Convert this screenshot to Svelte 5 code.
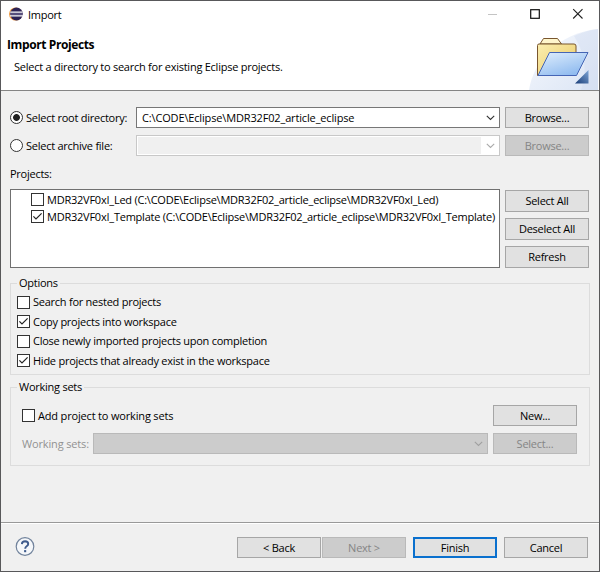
<script>
  let source = $state('root');
  let rootDirectory = 'C:\\CODE\\Eclipse\\MDR32F02_article_eclipse';

  let projects = $state([
    { name: 'MDR32VF0xI_Led', checked: false },
    { name: 'MDR32VF0xI_Template', checked: true },
  ]);

  let options = $state([
    { label: 'Search for nested projects', checked: false },
    { label: 'Copy projects into workspace', checked: true },
    { label: 'Close newly imported projects upon completion', checked: false },
    { label: 'Hide projects that already exist in the workspace', checked: true },
  ]);

  let useWorkingSets = $state(false);

  function setAll(checked) {
    projects.forEach((project) => {
      project.checked = checked;
    });
  }
</script>

{#snippet chevron()}
  <svg class="chevron" width="9" height="6" viewBox="0 0 9 6">
    <path d="M0.8 0.8 L4.5 4.5 L8.2 0.8" fill="none" stroke="currentColor" stroke-width="1.1" />
  </svg>
{/snippet}

<main class="dialog">
  <header class="titlebar">
    <svg class="logo" width="14" height="14" viewBox="0 0 14 14">
      <circle cx="6.6" cy="7" r="6.6" fill="#f39a3b" />
      <circle cx="7.5" cy="7" r="6.4" fill="#2c2255" />
      <path d="M1.2 5.1h12.5M0.9 8.9h13" stroke="#fff" stroke-width="1.1" />
      <path d="M0.9 7h13" stroke="#8d88ad" stroke-width="0.9" />
    </svg>
    <span class="title">Import</span>
    <svg class="controls" width="98" height="12" viewBox="0 0 98 12">
      <path d="M1 6.5h9" stroke="#c4c4c4" />
      <rect x="43.7" y="1.7" width="8.6" height="8.6" fill="none" stroke="#111" stroke-width="1.2" />
      <path d="M86.2 1.2l9.3 9.3M95.5 1.2l-9.3 9.3" stroke="#222" stroke-width="1.1" />
    </svg>
  </header>

  <section class="banner">
    <div>
      <h1>Import Projects</h1>
      <p>Select a directory to search for existing Eclipse projects.</p>
    </div>
    <svg class="art" width="69" height="62" viewBox="0 0 69 62">
      <defs>
        <linearGradient id="glow" x1="0" y1="0" x2="1" y2="1">
          <stop offset="0" stop-color="#f7f9fd" />
          <stop offset="1" stop-color="#dbe5f5" />
        </linearGradient>
        <linearGradient id="back" x1="0" y1="0" x2="1" y2="1">
          <stop offset="0" stop-color="#fbeeb0" />
          <stop offset="1" stop-color="#e9c966" />
        </linearGradient>
        <linearGradient id="front" x1="0" y1="0" x2="0.6" y2="1">
          <stop offset="0" stop-color="#e1effd" />
          <stop offset="1" stop-color="#91bcf0" />
        </linearGradient>
        <linearGradient id="corner" x1="0" y1="1" x2="1" y2="0">
          <stop offset="0" stop-color="#183c77" />
          <stop offset="1" stop-color="#7fa6d6" />
        </linearGradient>
      </defs>
      <path d="M0 62C4 35 28 5 69 1V62Z" fill="url(#glow)" />
      <path d="M45 8Q59 2 69 1V62H52Q62 35 45 8Z" fill="#cbd8ef" opacity="0.35" />
      <path d="M11 16L14.5 10.5H28.5L32.5 16Z" fill="#fff6cc" stroke="#79562f" />
      <path d="M8.5 17.5Q8.5 16 10 16H45Q47 16 47 18V45L45 47.5H8.5Z" fill="url(#back)" stroke="#79562f" />
      <path d="M9 47.5L20.5 24.5H59L47.5 47.5Z" fill="url(#front)" stroke="#4565b5" />
      <path d="M59.5 42V55.5H46Z" fill="url(#corner)" />
    </svg>
  </section>

  <div class="content">
    <div class="source">
      <label>
        <input type="radio" value="root" bind:group={source} />
        <span>Select root directory:</span>
      </label>
      <div class="combo"><span>{rootDirectory}</span>{@render chevron()}</div>
      <button>Browse...</button>
    </div>
    <div class="source">
      <label>
        <input type="radio" value="archive" bind:group={source} />
        <span>Select archive file:</span>
      </label>
      <div class="combo disabled"><div class="blank"></div>{@render chevron()}</div>
      <button disabled>Browse...</button>
    </div>

    <div class="caption">Projects:</div>
    <div class="projects">
      <div class="list">
        {#each projects as project}
          <label class="project">
            <input type="checkbox" bind:checked={project.checked} />
            <span>{project.name} ({rootDirectory}\{project.name})</span>
          </label>
        {/each}
      </div>
      <div class="actions">
        <button onclick={() => setAll(true)}>Select All</button>
        <button onclick={() => setAll(false)}>Deselect All</button>
        <button>Refresh</button>
      </div>
    </div>

    <fieldset class="options">
      <legend>Options</legend>
      {#each options as option}
        <label>
          <input type="checkbox" bind:checked={option.checked} />
          <span>{option.label}</span>
        </label>
      {/each}
    </fieldset>

    <fieldset class="sets">
      <legend>Working sets</legend>
      <div class="set-row">
        <label>
          <input type="checkbox" bind:checked={useWorkingSets} />
          <span>Add project to working sets</span>
        </label>
        <button>New...</button>
      </div>
      <div class="set-row">
        <span class="muted">Working sets:</span>
        <div class="combo off">{@render chevron()}</div>
        <button disabled>Select...</button>
      </div>
    </fieldset>
  </div>

  <footer>
    <svg class="help" width="20" height="20" viewBox="0 0 20 20">
      <circle cx="10" cy="9.5" r="8.8" fill="#f5f7fa" stroke="#71839c" stroke-width="1.2" />
      <path d="M6.9 7.1Q7 4.3 10.1 4.3Q13.2 4.4 13.2 6.9Q13.2 8.3 11.6 9.3Q10.2 10.2 10.2 11.7" fill="none" stroke="#3f5b8c" stroke-width="1.9" />
      <rect x="9.1" y="13.1" width="2.1" height="2.1" fill="#3f5b8c" />
    </svg>
    <button>&lt; Back</button>
    <button class="next" disabled>Next &gt;</button>
    <button class="finish">Finish</button>
    <button>Cancel</button>
  </footer>
</main>

<style>
  :global(body) {
    background: #f0f0f0;
  }

  .dialog {
    box-sizing: border-box;
    width: 600px;
    height: 572px;
    display: flex;
    flex-direction: column;
    border: 1px solid #58585a;
    background: #f0f0f0;
    color: #000;
    font: 11px/16px 'Open Sans', 'Noto Sans', sans-serif;
    letter-spacing: -0.25px;
    white-space: nowrap;
    overflow: hidden;
  }

  .titlebar {
    display: flex;
    align-items: center;
    height: 26px;
    padding: 0 14px 0 8px;
    background: #fff;
  }

  .title {
    flex: 1;
    margin: 1px 0 0 5px;
  }

  .banner {
    display: flex;
    justify-content: space-between;
    height: 63px;
    background: #fff;
    border-bottom: 1px solid #858585;
  }

  h1 {
    margin: 10px 0 0 6px;
    font-size: 12px;
    line-height: 16px;
    font-weight: 700;
    letter-spacing: -0.4px;
  }

  p {
    margin: 6px 0 0 13px;
  }

  .art {
    margin-top: 1px;
    margin-right: 1px;
  }

  .content {
    flex: 1;
    padding: 16px 10px 0 9px;
  }

  label {
    display: flex;
    align-items: center;
  }

  input {
    appearance: none;
    box-sizing: border-box;
    flex: none;
    width: 13px;
    height: 13px;
    margin: 0 3px 0 0;
    border: 1px solid #333;
    background: #fff;
  }

  input[type='radio'] {
    border-radius: 50%;
  }

  input[type='radio']:checked {
    background: radial-gradient(circle, #222 0 3px, #fff 3.8px);
  }

  input[type='checkbox']:checked {
    background: #fff url("data:image/svg+xml,%3Csvg xmlns='http://www.w3.org/2000/svg' viewBox='0 0 11 11'%3E%3Cpath d='M1.4 5.4L4 8L9.6 2.4' fill='none' stroke='%23222' stroke-width='1.2'/%3E%3C/svg%3E");
  }

  button {
    box-sizing: border-box;
    flex: none;
    width: 84px;
    height: 21px;
    padding: 0;
    border: 1px solid #a6a6a6;
    background: #e1e1e1;
    color: #000;
    font: inherit;
    letter-spacing: inherit;
    line-height: 19px;
  }

  button:disabled {
    border-color: #b9b9b9;
    background: #ccc;
    color: #858585;
  }

  .source {
    display: flex;
    align-items: center;
    height: 21px;
    margin-bottom: 7px;
  }

  .source label {
    width: 126px;
  }

  .source button {
    margin-left: 5px;
  }

  .combo {
    box-sizing: border-box;
    display: flex;
    flex: 1;
    align-items: center;
    justify-content: space-between;
    height: 21px;
    padding: 0 4px 0 5px;
    border: 1px solid #777;
    background: #fff;
    color: #333;
  }

  .combo span {
    color: #000;
    letter-spacing: -0.15px;
  }

  .combo.disabled {
    padding-left: 1px;
    border-color: #c8c8c8;
    color: #aaa;
  }

  .blank {
    width: 343px;
    height: 17px;
    background: #f0f0f0;
  }

  .combo.off {
    justify-content: flex-end;
    border-color: #b9b9b9;
    background: #ccc;
    color: #a0a0a0;
  }

  .chevron {
    flex: none;
  }

  .caption {
    margin: 10px 0 7px;
  }

  .projects {
    display: flex;
    gap: 5px;
    height: 79px;
  }

  .list {
    box-sizing: border-box;
    flex: 1;
    min-width: 0;
    padding: 1px 0 0 20px;
    border: 1px solid #707070;
    background: #fff;
  }

  .project {
    height: 17px;
    letter-spacing: -0.23px;
  }

  .actions {
    display: flex;
    flex-direction: column;
    gap: 6px;
    padding-top: 1px;
  }

  .actions button {
    height: 22px;
    line-height: 20px;
  }

  fieldset {
    box-sizing: border-box;
    width: 580px;
    margin: 0;
    border: 1px solid #dcdcdc;
  }

  legend {
    padding: 0 2px;
  }

  .options {
    height: 100px;
    margin-top: 7px;
    padding: 1.5px 6px 0;
  }

  .options label {
    height: 19.5px;
  }

  .sets {
    height: 87px;
    margin-top: 4px;
    padding: 3px 12px 0 11px;
  }

  .sets legend {
    margin-left: -5px;
  }

  .set-row {
    display: flex;
    align-items: center;
    height: 21px;
    margin-top: 7px;
  }

  .set-row label {
    flex: 1;
    letter-spacing: -0.17px;
  }

  .muted {
    width: 71px;
    color: #929292;
    letter-spacing: -0.15px;
  }

  .set-row .combo + button {
    margin-left: 5px;
  }

  footer {
    display: flex;
    align-items: center;
    box-sizing: border-box;
    height: 49px;
    padding: 0 11px 0 14px;
    border-top: 1px solid #999;
    box-shadow: inset 0 1px #fff;
  }

  .help {
    margin-right: auto;
  }

  .next {
    margin: 0 7px 0 1px;
  }

  .finish {
    margin-right: 7px;
    border: 2px solid #0a70ce;
    line-height: 17px;
  }
</style>
